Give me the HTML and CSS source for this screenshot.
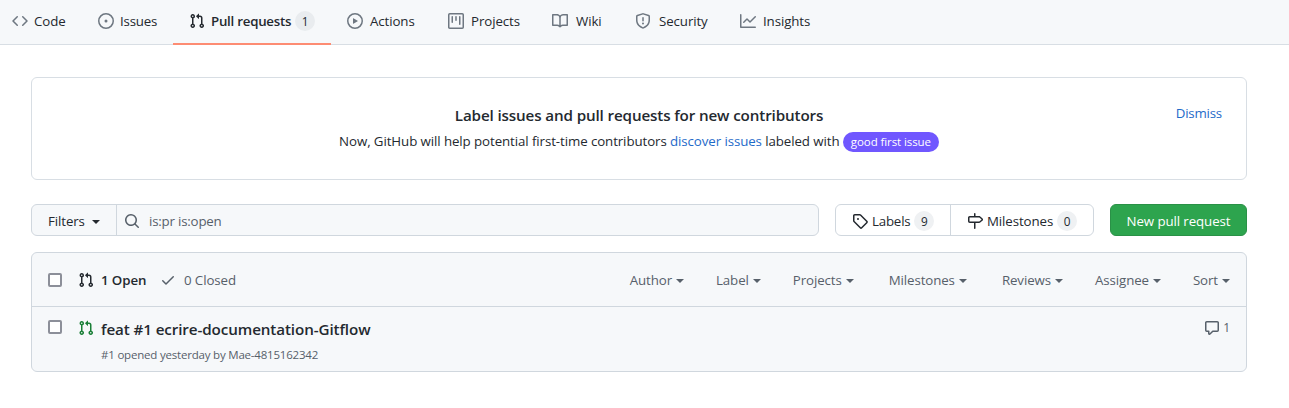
FILE: index.html
```html
<!DOCTYPE html>
<html lang="en">
<head>
<meta charset="utf-8">
<title>Pull requests</title>
<link rel="stylesheet" href="styles.css">
</head>
<body>
<svg class="defs" aria-hidden="true">
  <symbol id="pr" viewBox="0 0 16 16"><path fill-rule="evenodd" d="M7.177 3.073L9.573.677A.25.25 0 0110 .854v4.792a.25.25 0 01-.427.177L7.177 3.427a.25.25 0 010-.354zM3.75 2.5a.75.75 0 100 1.5.75.75 0 000-1.5zm-2.25.75a2.25 2.25 0 113 2.122v5.256a2.251 2.251 0 11-1.5 0V5.372A2.25 2.25 0 011.5 3.25zM11 2.5h-1V4h1a1 1 0 011 1v5.628a2.251 2.251 0 101.5 0V5A2.5 2.5 0 0011 2.5zm1 10.25a.75.75 0 111.5 0 .75.75 0 01-1.5 0zM3.75 12a.75.75 0 100 1.5.75.75 0 000-1.5z"/></symbol>
</svg>
<nav class="tabs">
  <a class="tab code"><svg class="icon" viewBox="0 0 16 16"><path fill-rule="evenodd" d="M4.72 3.22a.75.75 0 011.06 1.06L2.06 8l3.72 3.72a.75.75 0 11-1.06 1.06L.47 8.53a.75.75 0 010-1.06l4.25-4.25zm6.56 0a.75.75 0 10-1.06 1.06L13.94 8l-3.72 3.72a.75.75 0 101.06 1.06l4.25-4.25a.75.75 0 000-1.06l-4.25-4.25z"/></svg><span>Code</span></a>
  <a class="tab issues"><svg class="icon" viewBox="0 0 16 16"><path d="M8 9.5a1.5 1.5 0 100-3 1.5 1.5 0 000 3z"/><path fill-rule="evenodd" d="M8 0a8 8 0 100 16A8 8 0 008 0zM1.5 8a6.5 6.5 0 1113 0 6.5 6.5 0 01-13 0z"/></svg><span>Issues</span></a>
  <a class="tab selected"><svg class="icon"><use href="#pr"/></svg><span>Pull requests</span><b class="counter">1</b></a>
  <a class="tab"><svg class="icon" viewBox="0 0 16 16"><path fill-rule="evenodd" d="M1.5 8a6.5 6.5 0 1113 0 6.5 6.5 0 01-13 0zM8 0a8 8 0 100 16A8 8 0 008 0zM6.379 5.227A.25.25 0 006 5.442v5.117a.25.25 0 00.379.214l4.264-2.559a.25.25 0 000-.428L6.379 5.227z"/></svg><span>Actions</span></a>
  <a class="tab"><svg class="icon" viewBox="0 0 16 16"><path fill-rule="evenodd" d="M1.75 0A1.75 1.75 0 000 1.75v12.5C0 15.216.784 16 1.75 16h12.5A1.75 1.75 0 0016 14.25V1.75A1.75 1.75 0 0014.25 0H1.75zM1.5 1.75a.25.25 0 01.25-.25h12.5a.25.25 0 01.25.25v12.5a.25.25 0 01-.25.25H1.75a.25.25 0 01-.25-.25V1.75zM11.75 3a.75.75 0 00-.75.75v7.5a.75.75 0 001.5 0v-7.5a.75.75 0 00-.75-.75zm-8.25.75a.75.75 0 011.5 0v5.5a.75.75 0 01-1.5 0v-5.5zM8 3a.75.75 0 00-.75.75v3.5a.75.75 0 001.5 0v-3.5A.75.75 0 008 3z"/></svg><span>Projects</span></a>
  <a class="tab wide"><svg class="icon" viewBox="0 0 16 16"><path fill-rule="evenodd" d="M0 1.75A.75.75 0 01.75 1h4.253c1.227 0 2.317.59 3 1.501A3.744 3.744 0 0111.006 1h4.245a.75.75 0 01.75.75v10.5a.75.75 0 01-.75.75h-4.507a2.25 2.25 0 00-1.591.659l-.622.621a.75.75 0 01-1.06 0l-.622-.621A2.25 2.25 0 005.258 13H.75a.75.75 0 01-.75-.75V1.75zm8.755 3a2.25 2.25 0 012.25-2.25H14.5v9h-3.757c-.71 0-1.4.201-1.992.572l.004-7.322zm-1.504 7.324l.004-5.073-.002-2.253A2.25 2.25 0 005.003 2.5H1.5v9h3.757a3.75 3.75 0 011.994.574z"/></svg><span>Wiki</span></a>
  <a class="tab wide"><svg class="icon" viewBox="0 0 16 16"><path fill-rule="evenodd" d="M7.467.133a1.75 1.75 0 011.066 0l5.25 1.68A1.75 1.75 0 0115 3.48V7c0 1.566-.32 3.182-1.303 4.682-.983 1.498-2.585 2.813-5.032 3.855a1.7 1.7 0 01-1.33 0c-2.447-1.042-4.049-2.357-5.032-3.855C1.32 10.182 1 8.566 1 7V3.48a1.75 1.75 0 011.217-1.667l5.25-1.68zm.61 1.429a.25.25 0 00-.153 0l-5.25 1.68a.25.25 0 00-.174.238V7c0 1.358.275 2.666 1.057 3.86.784 1.194 2.121 2.34 4.366 3.297a.2.2 0 00.154 0c2.245-.956 3.582-2.104 4.366-3.298C13.225 9.666 13.5 8.36 13.5 7V3.48a.25.25 0 00-.174-.237l-5.25-1.68zM9 10.5a1 1 0 11-2 0 1 1 0 012 0zm-.25-5.75a.75.75 0 10-1.5 0v3a.75.75 0 001.5 0v-3z"/></svg><span>Security</span></a>
  <a class="tab"><svg class="icon" viewBox="0 0 16 16"><path fill-rule="evenodd" d="M1.5 1.75a.75.75 0 00-1.5 0v12.5c0 .414.336.75.75.75h14.5a.75.75 0 000-1.5H1.5V1.75zm14.28 2.53a.75.75 0 00-1.06-1.06L10 7.94 7.53 5.47a.75.75 0 00-1.06 0L3.22 8.72a.75.75 0 001.06 1.06L7 7.06l2.47 2.47a.75.75 0 001.06 0l5.25-5.25z"/></svg><span>Insights</span></a>
</nav>
<main class="content">
  <section class="notice">
    <div class="notice-text">
      <h1 class="notice-title">Label issues and pull requests for new contributors</h1>
      <p class="notice-body">Now, GitHub will help potential first-time contributors <a class="link">discover issues</a> labeled with <span class="pill">good first issue</span></p>
    </div>
    <a class="link dismiss">Dismiss</a>
  </section>
  <div class="toolbar">
    <div class="search">
      <button class="filters"><span>Filters</span><i class="caret"></i></button>
      <div class="query"><svg class="icon" viewBox="0 0 16 16"><path fill-rule="evenodd" d="M11.5 7a4.499 4.499 0 11-8.998 0A4.499 4.499 0 0111.5 7zm-.82 4.74a6 6 0 111.06-1.06l3.04 3.04a.75.75 0 11-1.06 1.06l-3.04-3.04z"/></svg><span>is:pr is:open</span></div>
    </div>
    <div class="group">
      <a class="group-item labels"><svg class="icon" viewBox="0 0 16 16"><path fill-rule="evenodd" d="M2.5 7.775V2.75a.25.25 0 01.25-.25h5.025a.25.25 0 01.177.073l6.25 6.25a.25.25 0 010 .354l-5.025 5.025a.25.25 0 01-.354 0l-6.25-6.25a.25.25 0 01-.073-.177zm-1.5 0V2.75C1 1.784 1.784 1 2.75 1h5.025c.464 0 .91.184 1.238.513l6.25 6.25a1.75 1.75 0 010 2.474l-5.026 5.026a1.75 1.75 0 01-2.474 0l-6.25-6.25A1.75 1.75 0 011 7.775zM6 5a1 1 0 100 2 1 1 0 000-2z"/></svg><span>Labels</span><b class="counter">9</b></a>
      <a class="group-item milestones"><svg class="icon" viewBox="0 0 16 16"><path fill-rule="evenodd" d="M7.75 0a.75.75 0 01.75.75V3h3.634c.414 0 .814.147 1.13.414l2.07 1.75a1.75 1.75 0 010 2.672l-2.07 1.75a1.75 1.75 0 01-1.13.414H8.5v5.25a.75.75 0 11-1.5 0V10H2.75A1.75 1.75 0 011 8.25v-3.5C1 3.784 1.784 3 2.75 3H7V.75A.75.75 0 017.75 0zm0 8.5h4.384a.25.25 0 00.161-.06l2.07-1.75a.25.25 0 000-.38l-2.07-1.75a.25.25 0 00-.161-.06H2.75a.25.25 0 00-.25.25v3.5c0 .138.112.25.25.25h5z"/></svg><span>Milestones</span><b class="counter">0</b></a>
    </div>
    <button class="create">New pull request</button>
  </div>
  <section class="list">
    <header class="list-head">
      <i class="check"></i>
      <svg class="icon"><use href="#pr"/></svg>
      <span class="open">1 Open</span>
      <svg class="icon tick" viewBox="0 0 16 16"><path fill-rule="evenodd" d="M13.78 4.22a.75.75 0 010 1.06l-7.25 7.25a.75.75 0 01-1.06 0L2.22 9.28a.75.75 0 011.06-1.06L6 10.94l6.72-6.72a.75.75 0 011.06 0z"/></svg>
      <span>0 Closed</span>
      <div class="menus">
        <span class="menu">Author<i class="caret"></i></span><span class="menu">Label<i class="caret"></i></span><span class="menu">Projects<i class="caret"></i></span><span class="menu">Milestones<i class="caret"></i></span><span class="menu">Reviews<i class="caret"></i></span><span class="menu">Assignee<i class="caret"></i></span><span class="menu">Sort<i class="caret"></i></span>
      </div>
    </header>
    <article class="row">
      <i class="check"></i>
      <svg class="icon green"><use href="#pr"/></svg>
      <div class="row-text">
        <h2 class="row-title">feat #1 ecrire-documentation-Gitflow</h2>
        <p class="row-meta">#1 opened yesterday by Mae-4815162342</p>
      </div>
      <span class="comments"><svg class="icon" viewBox="0 0 16 16"><path fill-rule="evenodd" d="M2.75 2.5a.25.25 0 00-.25.25v7.5c0 .138.112.25.25.25h2a.75.75 0 01.75.75v2.19l2.72-2.72a.75.75 0 01.53-.22h4.5a.25.25 0 00.25-.25v-7.5a.25.25 0 00-.25-.25H2.75zM1 2.75C1 1.784 1.784 1 2.75 1h10.5c.966 0 1.75.784 1.75 1.75v7.5A1.75 1.75 0 0113.25 12H9.06l-2.573 2.573A1.457 1.457 0 014 13.543V12H2.75A1.75 1.75 0 011 10.25v-7.5z"/></svg><span>1</span></span>
    </article>
  </section>
</main>
</body>
</html>
```
FILE: styles.css
```css
* { box-sizing: border-box; }
body { margin: 0; background: #fff; color: #24292f; font: 13.3px/20px "Open Sans", "Noto Sans", sans-serif; letter-spacing: -0.1px; white-space: nowrap; }
h1, h2, p { margin: 0; }
button { font: inherit; letter-spacing: inherit; color: inherit; border: 0; padding: 0; }
.defs { display: none; }
.icon { width: 16px; height: 16px; flex: none; fill: currentColor; }
.tabs { display: grid; grid-template-columns: 82px 91px 158px 101px 104px 83px 105px 103px; height: 45px; background: #f6f8fa; border-bottom: 1px solid #d8dee4; }
.tab { display: flex; align-items: center; gap: 7px; height: 45px; padding: 0 0 4px 16px; }
.tab .icon { color: #6e7781; }
.tab.code { padding-left: 12px; gap: 6px; }
.tab.issues { gap: 6px; letter-spacing: -0.2px; }
.tab.wide { gap: 8px; }
.tab.selected { gap: 6px; font-weight: 600; border-bottom: 2px solid #fd8c73; padding-bottom: 2px; letter-spacing: -0.25px; }
.tab.selected .icon { color: #24292f; }
.counter { min-width: 20px; height: 20px; border-radius: 10px; background: #eff1f3; font-size: 11.8px; line-height: 20px; font-weight: 400; text-align: center; letter-spacing: 0; }
.tab .counter { margin-left: -2px; background: #e9ecef; }
.content { padding: 32px 42px 0 31px; }
.notice { display: grid; grid-template-columns: 1fr; height: 103px; border: 1px solid #d8dee4; border-radius: 6px; padding: 24px; }
.notice-text, .dismiss { grid-area: 1 / 1; }
.notice-text { text-align: center; }
.notice-title { font-size: 15.2px; line-height: 26px; font-weight: 600; letter-spacing: -0.13px; }
.notice-body { line-height: 26px; letter-spacing: -0.09px; }
.link { color: #1f6bc9; }
.dismiss { justify-self: end; align-self: start; padding-top: 1px; letter-spacing: -0.2px; }
.pill { display: inline-block; height: 20px; line-height: 20px; padding: 0 8px; border-radius: 10px; background: #7057ff; color: #fff; font-size: 11.5px; }
.toolbar { display: flex; height: 32px; margin-top: 24px; }
.search { display: flex; width: 788px; border: 1px solid #d0d7de; border-radius: 6px; background: #f6f8fa; }
.filters { display: flex; align-items: center; justify-content: space-between; width: 85px; padding: 2px 16px 0; background: none; border-right: 1px solid #d0d7de; }
.caret { margin-top: 2px; border: 4px solid transparent; border-top-color: currentColor; border-bottom: 0; }
.query { display: flex; align-items: center; gap: 9px; padding: 2px 7px 0; color: #57606a; letter-spacing: -0.2px; }
.group { display: flex; width: 259px; margin-left: 16px; border: 1px solid #d0d7de; border-radius: 6px; }
.group-item { display: flex; align-items: center; gap: 4px; padding: 2px 16px 0; }
.labels { width: 115px; border-right: 1px solid #d0d7de; letter-spacing: -0.2px; }
.milestones { letter-spacing: -0.1px; }
.create { width: 137px; margin-left: 16px; padding-top: 2px; border: 1px solid #2a9147; border-radius: 6px; background: #2da44e; color: #fff; }
.list { margin-top: 16px; height: 120px; border: 1px solid #d0d7de; border-radius: 6px; background: #f6f8fa; }
.list-head { display: flex; align-items: center; height: 54px; padding: 0 16px; border-bottom: 1px solid #d0d7de; color: #57606a; }
.check { flex: none; width: 14px; height: 14px; margin-right: 16px; border: 2px solid #8c8f99; border-radius: 2px; background: #fff; }
.list-head > .icon:not(.tick) { color: #24292f; }
.open { width: 45px; margin: 0 14px 0 7px; font-weight: 600; color: #24292f; }
.tick { margin-right: 8px; }
.menus { display: flex; gap: 32px; margin-left: auto; }
.menu { display: flex; align-items: center; gap: 4px; }
.menu:nth-child(3), .menu:nth-child(4) { margin-right: 3px; }
.row { display: flex; align-items: flex-start; height: 65px; padding: 13px 16px 0; color: #57606a; }
.green { color: #1a7f37; }
.row-text { margin-left: 7px; }
.row-title { margin-top: -1px; font-size: 15.2px; line-height: 20px; font-weight: 600; color: #24292f; }
.row-meta { margin-top: 7px; font-size: 11.5px; line-height: 18px; letter-spacing: -0.2px; }
.comments { display: flex; align-items: center; gap: 3px; margin-left: auto; font-size: 12px; line-height: 16px; }
```
